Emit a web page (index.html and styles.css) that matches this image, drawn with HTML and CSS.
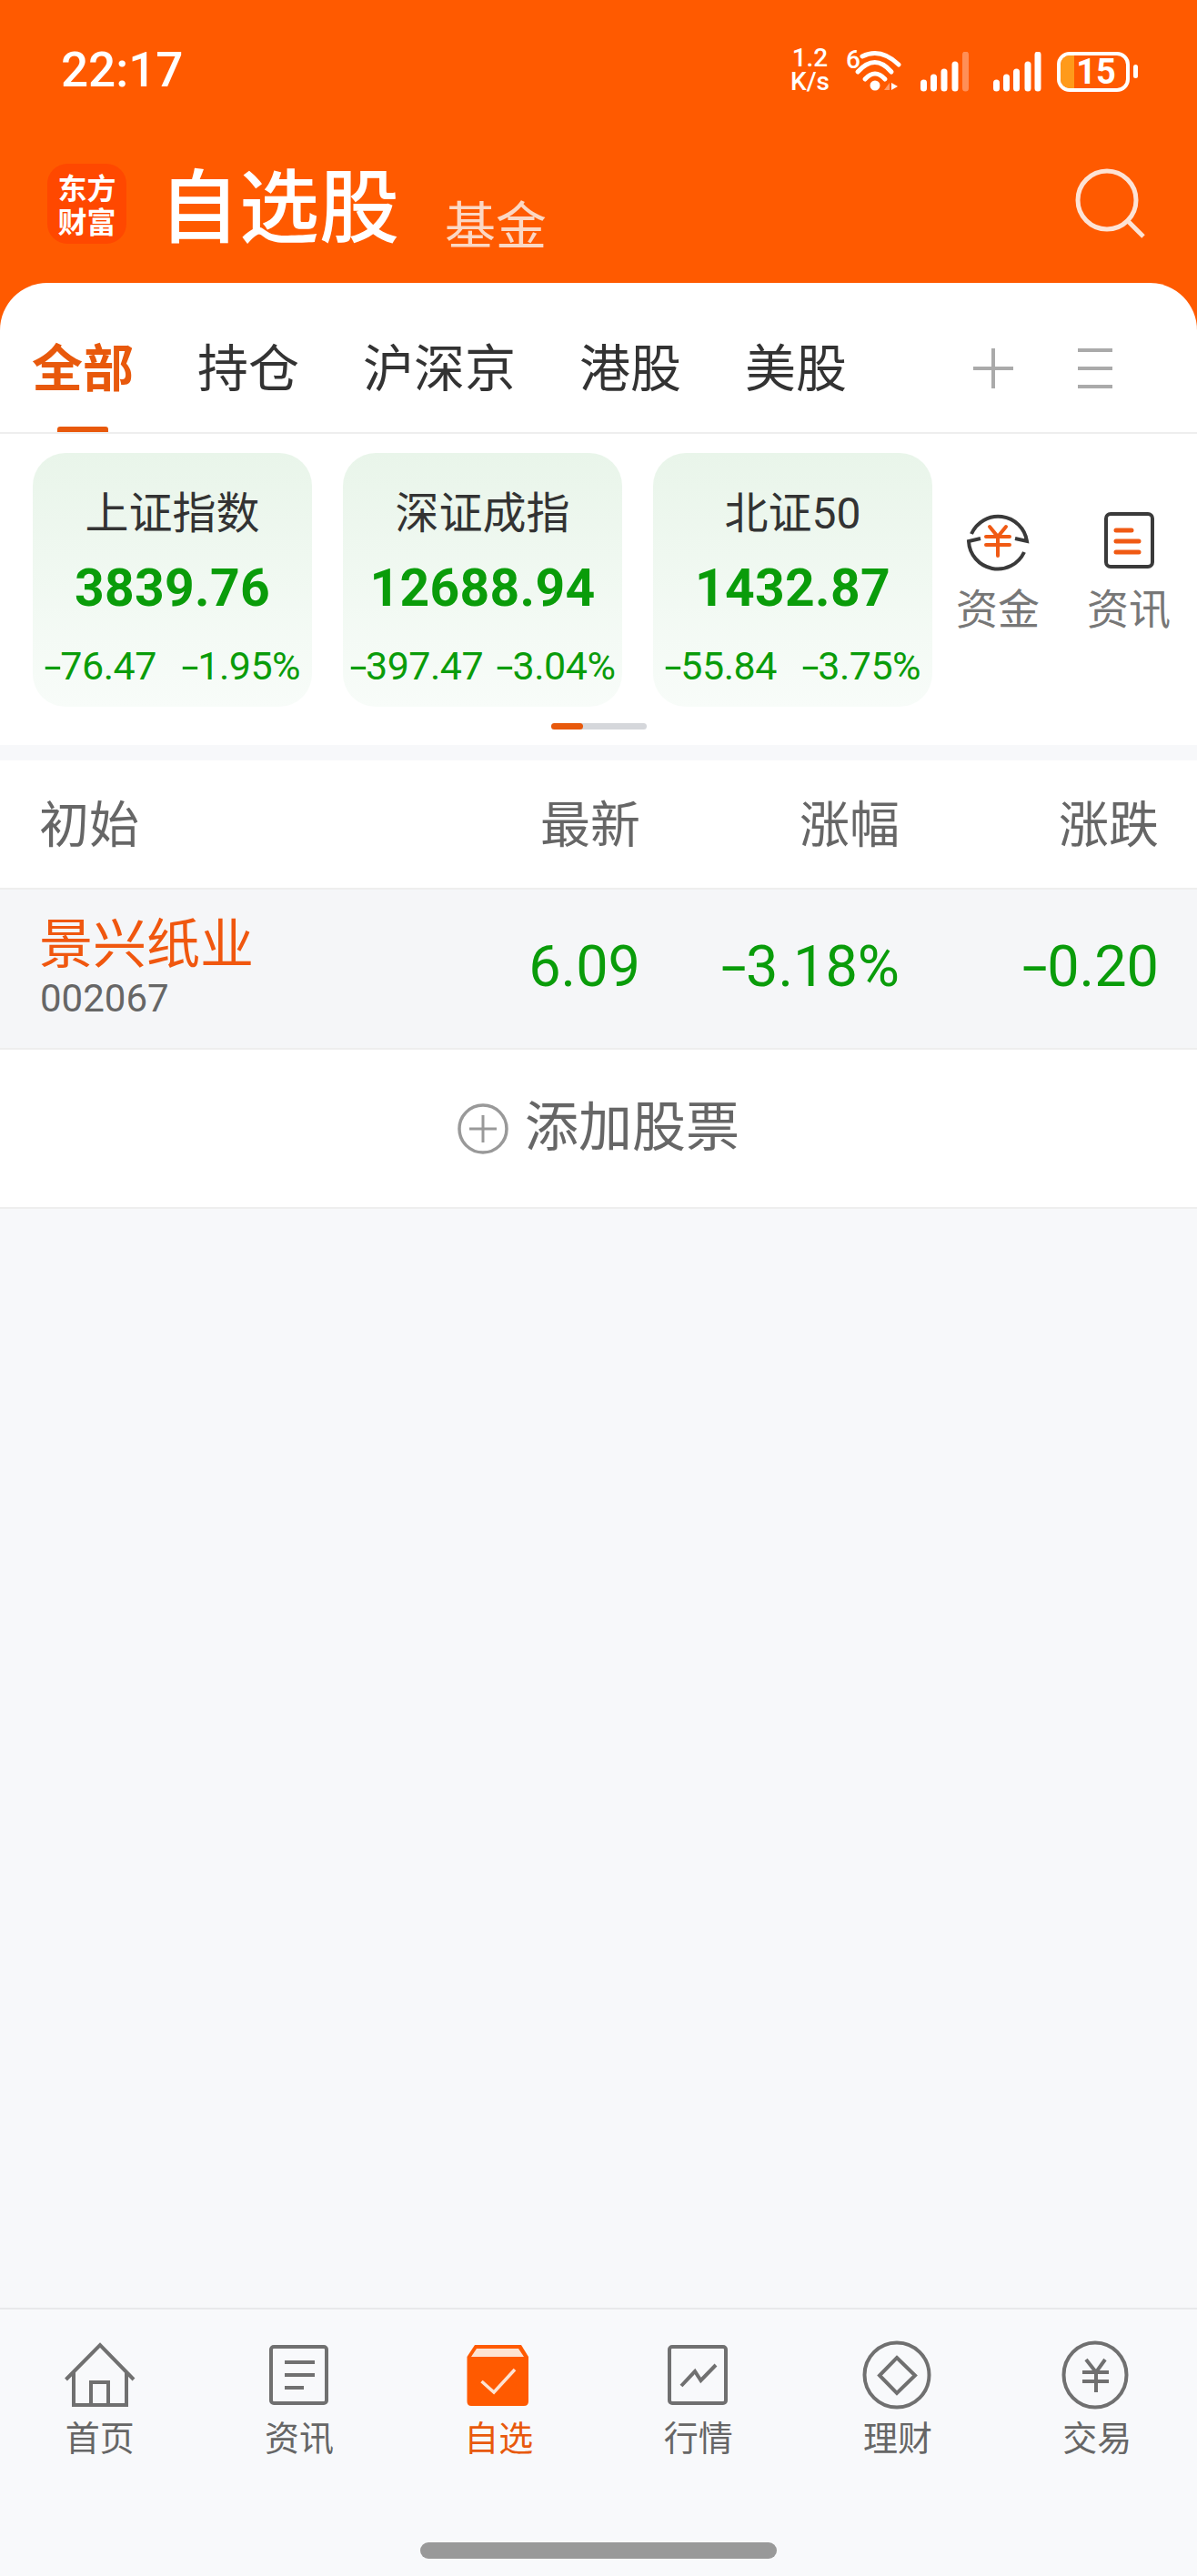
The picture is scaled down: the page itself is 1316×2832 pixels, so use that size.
FILE: index.html
```html
<!DOCTYPE html>
<html lang="zh-CN">
<head>
<meta charset="utf-8">
<title>自选股</title>
<link rel="stylesheet" href="styles.css">
</head>
<body>
<div class="app">
  <div class="top">
    <div class="status">
      <span class="time">22:17</span>
      <div class="status-right">
        <div class="speed"><span>1.2</span><span>K/s</span></div>
        <svg class="wifi" width="76" height="54" viewBox="0 0 76 54">
          <text x="1" y="25" class="wifi-six">6</text>
          <path d="M19 12 Q39 2 59 21" class="wifi-arc"/>
          <path d="M14 29 Q33 8 51 29" class="wifi-arc"/>
          <path d="M22 37 Q33 25 44 37" class="wifi-arc"/>
          <circle cx="33" cy="44" r="5.5" fill="#fff"/>
          <path d="M43 49 L49 41 V49 Z" fill="#ff9a6a"/>
          <path d="M51 41 L58 45 L51 49 Z" fill="#fff"/>
        </svg>
        <svg class="signal" width="54" height="44" viewBox="0 0 54 44">
          <g class="bar-white"><path d="M3.500 34V40"/><path d="M14.500 28V40"/><path d="M26 22V40"/><path d="M38 14V40"/></g>
          <path d="M49.500 3V40" class="bar-dim"/>
        </svg>
        <svg class="signal signal-two" width="54" height="44" viewBox="0 0 54 44">
          <g class="bar-white"><path d="M3.500 34V40"/><path d="M14.500 28V40"/><path d="M25.500 22V40"/><path d="M38 14V40"/><path d="M49 3V40"/></g>
        </svg>
        <div class="battery"><div class="battery-body"><span class="battery-fill"></span><span class="battery-num">15</span></div><span class="battery-nub"></span></div>
      </div>
    </div>
    <div class="titlebar">
      <div class="logo"><span>东方</span><span>财富</span></div>
      <h1 class="title">自选股</h1>
      <span class="subtitle">基金</span>
      <svg class="search" width="80" height="80" viewBox="0 0 80 80">
        <circle cx="37" cy="37" r="32" class="search-line"/>
        <path d="M60 60 L77 77" class="search-line"/>
      </svg>
    </div>
    <nav class="tabs">
      <span class="tab tab-active">全部</span>
      <span class="tab">持仓</span>
      <span class="tab">沪深京</span>
      <span class="tab">港股</span>
      <span class="tab">美股</span>
      <div class="tab-tools">
        <svg width="48" height="48" viewBox="0 0 48 48"><path d="M24 2V46M2 24H46" class="tool-line"/></svg>
        <svg width="48" height="48" viewBox="0 0 48 48"><path d="M5 4H43M5 24H43M5 44H43" class="tool-line"/></svg>
      </div>
    </nav>
  </div>

  <section class="indices">
    <div class="index-row">
      <div class="card">
        <div class="card-name">上证指数</div>
        <div class="card-price">3839.76</div>
        <div class="card-change"><span><span class="minus">-</span>76.47</span><span><span class="minus">-</span>1.95%</span></div>
      </div>
      <div class="card">
        <div class="card-name">深证成指</div>
        <div class="card-price">12688.94</div>
        <div class="card-change card-change-tight"><span><span class="minus">-</span>397.47</span><span><span class="minus">-</span>3.04%</span></div>
      </div>
      <div class="card">
        <div class="card-name">北证50</div>
        <div class="card-price">1432.87</div>
        <div class="card-change"><span><span class="minus">-</span>55.84</span><span><span class="minus">-</span>3.75%</span></div>
      </div>
      <div class="shortcuts">
        <div class="shortcut">
          <svg width="80" height="80" viewBox="0 0 80 80">
            <path d="M11 33 A32 32 0 0 1 72 41 L59 38" class="icon-dark"/>
            <path d="M69 53 A32 32 0 0 1 8 41 L21 38" class="icon-dark"/>
            <path d="M31 25 L40 36 L49 25 M27 36H53M27 45H53M40 36V57" class="icon-orange"/>
          </svg>
          <span>资金</span>
        </div>
        <div class="shortcut">
          <svg width="80" height="80" viewBox="0 0 80 80">
            <rect x="15" y="11" width="51" height="58" rx="5" class="icon-dark"/>
            <path d="M26 29H43M26 41H51M26 53H51" class="icon-orange icon-orange-thick"/>
          </svg>
          <span>资讯</span>
        </div>
      </div>
    </div>
    <div class="pager"><span class="pager-on"></span></div>
  </section>

  <section class="watchlist">
    <div class="list-head">
      <span>初始</span><span class="num">最新</span><span class="num">涨幅</span><span class="num">涨跌</span>
    </div>
    <div class="stock">
      <div class="stock-id">
        <span class="stock-name">景兴纸业</span>
        <span class="stock-code">002067</span>
      </div>
      <span class="num stock-val">6.09</span><span class="num stock-val"><span class="minus minus-big">-</span>3.18%</span><span class="num stock-val"><span class="minus minus-big">-</span>0.20</span>
    </div>
    <div class="add">
      <svg width="56" height="56" viewBox="0 0 56 56"><circle cx="28" cy="28" r="26" class="add-ring"/><path d="M28 13V43M13 28H43" class="add-cross"/></svg>
      <span class="add-label">添加股票</span>
    </div>
  </section>

  <div class="spacer"></div>

  <footer class="bottom">
    <div class="nav">
      <div class="nav-item">
        <svg width="80" height="80" viewBox="0 0 80 80"><path d="M2.500 43 L40 5 L77 43" class="nav-line"/><path d="M11 34V71H69V34M30 71V46H49V71" class="nav-line"/></svg>
        <span>首页</span>
      </div>
      <div class="nav-item">
        <svg width="80" height="80" viewBox="0 0 80 80"><rect x="9" y="7" width="61" height="62" rx="3" class="nav-line"/><path d="M24 24H57M24 38H57M24 52H45" class="nav-line"/></svg>
        <span>资讯</span>
      </div>
      <div class="nav-item nav-active">
        <svg width="80" height="80" viewBox="0 0 80 80">
          <path d="M14 5H65L73 18V67Q73 72 68 72H10Q5.500 72 5.500 67V18Z" fill="#ff5a00"/>
          <path d="M16 9H62L68 18H10Z" fill="#fde3d3"/>
          <path d="M21.500 45L35 57L58 32" class="check"/>
        </svg>
        <span>自选</span>
      </div>
      <div class="nav-item">
        <svg width="80" height="80" viewBox="0 0 80 80"><rect x="8" y="7" width="62" height="62" rx="3" class="nav-line"/><path d="M21 50L36 34L42.500 44L59 27" class="nav-line"/></svg>
        <span>行情</span>
      </div>
      <div class="nav-item">
        <svg width="80" height="80" viewBox="0 0 80 80"><circle cx="39" cy="38" r="35.500" class="nav-line"/><path d="M39 19L59 38.500L39 58L20 38.500Z" class="nav-line"/></svg>
        <span>理财</span>
      </div>
      <div class="nav-item">
        <svg width="80" height="80" viewBox="0 0 80 80"><ellipse cx="38" cy="38" rx="34.500" ry="35.500" class="nav-line"/><path d="M28 21L39 35L49 21M24 35H53M24 45H53M39 35V57" class="nav-line"/></svg>
        <span>交易</span>
      </div>
    </div>
    <div class="home-bar"></div>
  </footer>
</div>
</body>
</html>
```

FILE: styles.css
```css
* { box-sizing: border-box; }
html, body { margin: 0; padding: 0; }
body {
  font-family: "Noto Sans CJK SC", "Noto Sans", sans-serif;
  background: #f7f8fa;
}
.app {
  width: 1316px;
  height: 2832px;
  display: flex;
  flex-direction: column;
  overflow: hidden;
}

/* Top */
.top { background: #ff5a00; }
.status {
  height: 104px;
  padding: 50px 65px 0 67px;
  display: flex;
  justify-content: space-between;
  align-items: center;
  color: #fff;
}
.time { font: 500 53px/54px Roboto, sans-serif; }
.status-right { display: flex; align-items: center; }
.speed {
  display: flex;
  flex-direction: column;
  align-items: center;
  font: 500 28px/26px Roboto, sans-serif;
  margin-right: 17px;
}
.wifi { margin-right: 7px; }
.wifi-six { font: 500 28px Roboto, sans-serif; fill: #fff; }
.wifi-arc { fill: none; stroke: #fff; stroke-width: 5; stroke-linecap: round; }
.signal { margin-top: 3px; }
.signal-two { margin-left: 26px; margin-right: 16px; }
.bar-white path { stroke: #fff; stroke-width: 7; stroke-linecap: round; fill: none; }
.bar-dim { stroke: #ff8f57; stroke-width: 7; stroke-linecap: round; fill: none; }
.battery { display: flex; align-items: center; margin-top: 3px; }
.battery-body {
  position: relative;
  width: 80px;
  height: 44px;
  border: 4px solid #fff;
  border-radius: 14px;
  display: flex;
  align-items: center;
  justify-content: center;
  overflow: hidden;
}
.battery-fill {
  position: absolute;
  left: 0;
  top: 0;
  bottom: 0;
  width: 15px;
  background: #ff9a1a;
}
.battery-num {
  position: relative;
  font: 700 38px/36px Roboto, sans-serif;
  margin-left: 6px;
}
.battery-nub {
  width: 5px;
  height: 15px;
  margin-left: 4px;
  background: #fff;
  border-radius: 3px;
}
.titlebar {
  height: 207px;
  padding: 76px 56px 0 52px;
  display: flex;
  align-items: flex-start;
  color: #fff;
}
.logo {
  width: 87px;
  height: 88px;
  background: #ff4800;
  border-radius: 22px;
  display: flex;
  flex-direction: column;
  align-items: center;
  justify-content: center;
  font-weight: 700;
  font-size: 32px;
  line-height: 37px;
}
.title {
  margin: -6px 0 0 36px;
  font-size: 88px;
  line-height: 94px;
  font-weight: 500;
}
.subtitle {
  margin: 35px 0 0 50px;
  font-size: 56px;
  line-height: 58px;
  color: #fbd8c4;
}
.search { margin: 3px 0 0 auto; }
.search-line { fill: none; stroke: #fde3d5; stroke-width: 5; }

/* Tabs */
.tabs {
  height: 166px;
  padding: 59px 88px 0 35px;
  display: flex;
  gap: 70px;
  background: #fff;
  border-radius: 52px 52px 0 0;
  border-bottom: 2px solid #eeeeee;
}
.tab {
  position: relative;
  font-size: 56px;
  line-height: 62px;
  color: #333;
}
.tab-active { color: #e8590c; font-weight: 700; }
.tab-active::after {
  content: "";
  position: absolute;
  left: 28px;
  bottom: 0;
  width: 56px;
  height: 6px;
  border-radius: 3px 3px 0 0;
  background: #e8590c;
}
.tab-tools {
  margin-left: auto;
  display: flex;
  gap: 64px;
  margin-top: 11px;
  align-items: flex-start;
}
.tool-line { fill: none; stroke: #aaaaaa; stroke-width: 4; }

/* Index cards */
.indices { background: #fff; padding: 21px 0 17px; }
.index-row { display: flex; padding-left: 36px; gap: 34px; align-items: flex-start; }
.card {
  width: 307px;
  height: 279px;
  padding-top: 37px;
  border-radius: 36px;
  background: linear-gradient(#e9f5ea, #f8fcf9);
  display: flex;
  flex-direction: column;
  align-items: center;
}
.card-name { font-size: 48px; line-height: 60px; color: #333; font-family: Roboto, "Noto Sans CJK SC", sans-serif; }
.card-price {
  margin-top: 19px;
  font: 700 57px/66px Roboto, sans-serif;
  letter-spacing: 0.3px;
  color: #0a9c0a;
}
.card-change {
  margin-top: 27px;
  display: flex;
  gap: 28px;
  font: 400 43px/50px Roboto, sans-serif;
  letter-spacing: -0.5px;
  color: #0a9c0a;
  white-space: nowrap;
}
.card-change-tight { gap: 15px; }
.minus {
  display: inline-block;
  margin: 0 3px;
  transform: scaleX(1.6);
}
.minus-big { margin: 0 5px; }
.shortcuts { display: flex; margin-left: -34px; }
.shortcut {
  width: 144px;
  margin-top: 56px;
  display: flex;
  flex-direction: column;
  align-items: center;
  font-size: 46px;
  line-height: 50px;
  color: #777;
}
.shortcut span { margin-top: 7px; }
.icon-dark { fill: none; stroke: #3a3a3a; stroke-width: 4; }
.icon-orange { fill: none; stroke: #f05a14; stroke-width: 4; stroke-linecap: round; }
.icon-orange-thick { stroke-width: 5; }
.pager {
  width: 105px;
  height: 7px;
  margin: 18px auto 0;
  background: #d5d7db;
  border-radius: 4px;
}
.pager-on {
  display: block;
  width: 35px;
  height: 7px;
  background: #e8590c;
  border-radius: 4px;
}

/* List */
.watchlist { margin-top: 17px; }
.list-head, .stock {
  display: grid;
  grid-template-columns: 1fr 285px 285px 285px;
  padding: 0 42px 0 43px;
  align-items: center;
}
.list-head {
  height: 142px;
  padding-bottom: 8px;
  background: #fff;
  border-bottom: 2px solid #eeeeee;
  font-size: 55px;
  color: #666;
}
.num { text-align: right; }
.stock {
  height: 176px;
  background: #f5f6f8;
  border-bottom: 2px solid #eeeeee;
}
.stock-id { display: flex; flex-direction: column; }
.stock-name { font-size: 59px; line-height: 70px; color: #f0570f; margin-top: -9px; }
.stock-code { font: 400 42px/48px Roboto, sans-serif; color: #666; margin: 5px 0 0 1px; }
.stock-val { font: 400 63px/70px Roboto, sans-serif; color: #0a9c0a; margin-top: -5px; }
.add {
  height: 175px;
  background: #fff;
  border-bottom: 2px solid #eeeeee;
  display: flex;
  align-items: center;
  justify-content: center;
  gap: 18px;
  font-size: 59px;
  color: #666;
}
.add-label { margin-top: -12px; }
.add-ring { fill: none; stroke: #999; stroke-width: 3.500; }
.add-cross { fill: none; stroke: #999; stroke-width: 3; }

.spacer { flex: 1; }

/* Bottom */
.bottom {
  height: 295px;
  border-top: 2px solid #e8e9eb;
  background: #f8f9fb;
  position: relative;
}
.nav { display: grid; grid-template-columns: repeat(6, 1fr); padding-top: 34px; }
.nav-item {
  display: flex;
  flex-direction: column;
  align-items: center;
  font-size: 38px;
  line-height: 44px;
  color: #666;
}
.nav-item span { margin-top: 3px; }
.nav-active { color: #e8590c; }
.nav-line { fill: none; stroke: #707070; stroke-width: 4; }
.check { fill: none; stroke: #fde3d3; stroke-width: 3.500; }
.home-bar {
  position: absolute;
  left: 462px;
  top: 256px;
  width: 392px;
  height: 18px;
  border-radius: 9px;
  background: #999;
}
```
